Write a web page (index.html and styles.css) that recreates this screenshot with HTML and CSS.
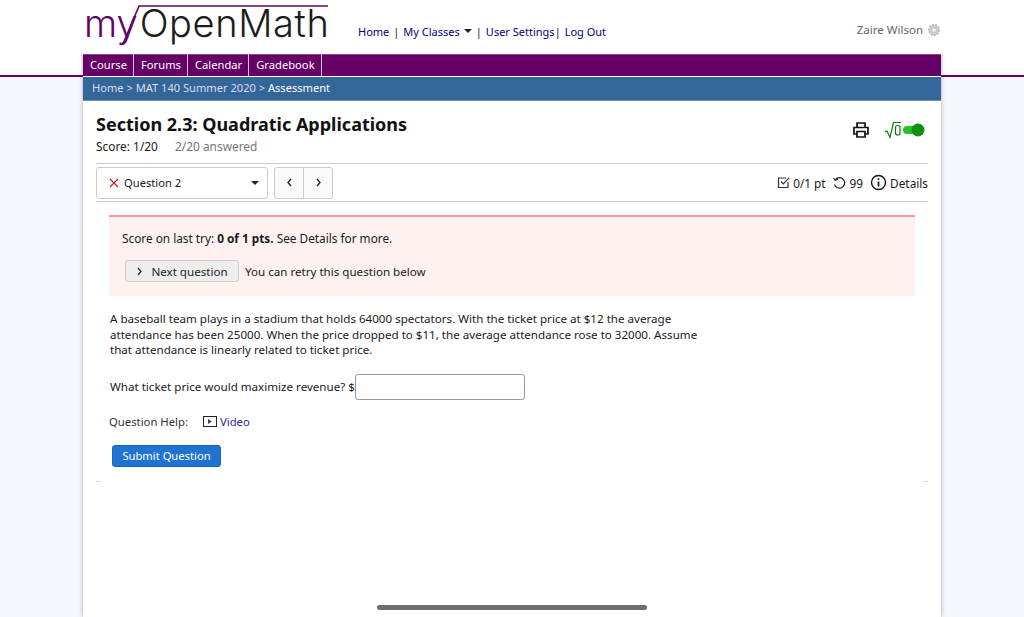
FILE: index.html
```html
<!DOCTYPE html>
<html lang="en">
<head>
<meta charset="utf-8">
<title>Assessment</title>
<link rel="stylesheet" href="styles.css">
</head>
<body>
<div class="band"></div>
<div class="page">
  <header class="head">
    <div class="logo"><span class="logo-my">my</span><span class="logo-rest">OpenMath</span><svg class="logo-root" width="206" height="40" viewBox="0 0 206 40"><path d="M1 39 L 17 1 H 206" fill="none" stroke="#660066" stroke-width="1.600"/></svg></div>
    <nav class="toplinks"><a>Home</a><span class="sep">|</span><a>My Classes</a><span class="caret"></span><span class="sep">|</span><a>User Settings</a><span class="sep tight">|</span><a>Log Out</a></nav>
    <div class="user">Zaire Wilson
      <svg class="gear" width="14" height="14" viewBox="0 0 14 14"><circle cx="7" cy="7" r="5" fill="#d4d4d4" stroke="#bdbdbd" stroke-width="2" stroke-dasharray="2 1"/><circle cx="7" cy="7" r="2.500" fill="#f0f0f0" stroke="#bdbdbd"/></svg>
    </div>
  </header>
  <div class="tabs"><a class="tab">Course</a><a class="tab">Forums</a><a class="tab">Calendar</a><a class="tab">Gradebook</a></div>
  <div class="crumbs">Home &gt; MAT 140 Summer 2020 &gt; <b>Assessment</b></div>
  <main class="main">
    <div class="title-row">
      <div>
        <h1>Section 2.3: Quadratic Applications</h1>
        <div class="score">Score: 1/20 <span class="answered">2/20 answered</span></div>
      </div>
      <div class="tools">
        <svg width="18" height="18" viewBox="0 0 18 18" fill="none" stroke="#111" stroke-width="1.700"><path d="M5 6 V2 H13 V6"/><path d="M5 13 H2 V6.500 H16 V13 H13"/><path d="M5 10.500 H13 V16 H5 Z"/></svg>
        <svg class="sqrt" width="42" height="18" viewBox="0 0 42 18"><path d="M1 11 L3 10 L6 16.500 L9.500 1.500 H17" fill="none" stroke="#0a7a0a" stroke-width="1.200"/><rect x="11.500" y="4.500" width="4.500" height="9.500" rx="2" fill="none" stroke="#0a7a0a" stroke-width="1.200"/><rect x="19" y="5" width="16" height="8" rx="4" fill="#22c322"/><circle cx="34" cy="9" r="6.500" fill="#129012"/></svg>
      </div>
    </div>
    <div class="qbar">
      <div class="select"><svg class="x" width="10" height="10" viewBox="0 0 10 10"><path d="M1 1 L9 9 M9 1 L1 9" fill="none" stroke="#c02020" stroke-width="1.100"/></svg><span class="qname">Question 2</span><span class="caret dark"></span></div>
      <div class="pager">
        <span class="pg"><svg width="7" height="9" viewBox="0 0 7 9"><path d="M5 1 L2 4.500 L5 8" fill="none" stroke="#222" stroke-width="1.300"/></svg></span>
        <span class="pg"><svg width="7" height="9" viewBox="0 0 7 9"><path d="M2 1 L5 4.500 L2 8" fill="none" stroke="#222" stroke-width="1.300"/></svg></span>
      </div>
      <div class="qinfo">
        <svg width="13" height="13" viewBox="0 0 13 13" fill="none" stroke="#333" stroke-width="1.200"><path d="M11 6 V11.500 H1.500 V2 H9"/><path d="M3.800 5.500 L6.300 8 L12 1.800"/></svg>
        <span class="i1">0/1 pt</span>
        <svg width="15" height="14" viewBox="0 0 15 14" fill="none" stroke="#222" stroke-width="1.200"><path d="M3.500 3.500 A5.200 5.200 0 1 1 2.500 8.500"/><path d="M1.500 2 L3.300 4.300 L6.200 3.300"/></svg>
        <span class="i2">99</span>
        <svg width="17" height="17" viewBox="0 0 17 17" fill="none" stroke="#111" stroke-width="1.400"><circle cx="8.500" cy="8.500" r="7"/><path d="M8.500 7.500 V12.500" stroke-width="1.700"/><path d="M8.500 4.300 V6" stroke-width="1.700"/></svg>
        <span>Details</span>
      </div>
    </div>
    <section class="body">
      <div class="alert">
        <p class="alert-line">Score on last try: <b>0 of 1 pts.</b> See Details for more.</p>
        <div class="alert-next"><button class="next"><svg width="7" height="9" viewBox="0 0 7 9"><path d="M2 1 L5 4.500 L2 8" fill="none" stroke="#222" stroke-width="1.200"/></svg>Next question</button><span>You can retry this question below</span></div>
      </div>
      <p class="question">A baseball team plays in a stadium that holds 64000 spectators. With the ticket price at $12 the average attendance has been 25000. When the price dropped to $11, the average attendance rose to 32000. Assume that attendance is linearly related to ticket price.</p>
      <div class="answer">What ticket price would maximize revenue? $<input class="field" type="text"></div>
      <div class="help">Question Help:
        <svg class="vid" width="14" height="11" viewBox="0 0 14 11"><rect x="0.500" y="0.500" width="13" height="10" fill="none" stroke="#222"/><path d="M5 3 L9 5.500 L5 8 Z" fill="#444"/></svg><a>Video</a>
      </div>
      <button class="submit">Submit Question</button>
    </section>
    <div class="rule"></div>
  </main>
</div>
<div class="home-bar"></div>
</body>
</html>
```
FILE: styles.css
```css
html, body { margin: 0; height: 617px; overflow: hidden; }
body { background: #f6f6ff; font-family: "Noto Sans", sans-serif; font-size: 11.600px; color: #1a1a1a; position: relative; }
.band { position: absolute; left: 0; right: 0; top: 0; height: 75px; background: #fff; border-bottom: 2px solid #660066; }
.page { position: relative; width: 858px; margin-left: 83px; height: 617px; background: #fff; box-shadow: 0 0 4px rgba(0,0,0,.35); display: flex; flex-direction: column; }
.head { height: 54px; background: #fff; display: flex; align-items: flex-start; position: relative; box-shadow: 0 -4px 0 4px #fff; }
.logo { position: relative; width: 275px; font-family: "Inter", sans-serif; font-weight: 300; font-size: 38px; line-height: 40px; margin-top: 3px; padding-left: 1px; box-sizing: border-box; white-space: nowrap; }
.logo-my { color: #660066; }
.logo-rest { color: #1c1c1c; margin-left: 2px; letter-spacing: .6px; }
.logo-root { position: absolute; left: 39px; top: 2px; overflow: visible; }
.toplinks { margin-top: 24px; color: #1a1a1a; display: flex; align-items: center; height: 14px; font-size: 11px; }
.toplinks a { color: #000080; }
.sep { margin: 0 4px; }
.sep.tight { margin: 0 4px 0 0; }
.caret { width: 0; height: 0; border: 4px solid transparent; border-top: 4px solid #222; border-bottom: 0; margin-left: 4px; display: inline-block; }
.user { margin-left: auto; margin-top: 22px; color: #666; display: flex; align-items: center; gap: 4px; font-size: 11.500px; }
.tabs { height: 22px; background: #660066; display: flex; box-shadow: inset 0 1px 0 #8a4a8a; font-size: 11.200px; }
.tab { color: #fff; padding: 0 6px 0 7px; line-height: 22px; border-right: 1px solid #ccc; }
.crumbs { line-height: 22px; margin-top: 1px; background: #336699; color: #dde; padding-left: 9px; border-bottom: 1px solid #6a8fb5; height: 23px; font-size: 11.100px; }
.crumbs b { color: #fff; font-weight: normal; }
.main { padding: 0 13px; flex: 1; display: flex; flex-direction: column; }
.title-row { display: flex; justify-content: space-between; height: 62px; border-bottom: 1px solid #ccc; }
h1 { margin: 12px 0 0; font-size: 18px; line-height: 23px; font-weight: bold; color: #111; }
.score { margin-top: 3px; line-height: 14px; font-size: 11.900px; }
.answered { color: #777; margin-left: 14px; }
.tools { display: flex; gap: 14px; margin-top: 20px; margin-right: 2px; align-items: flex-start; }
.qbar { display: flex; align-items: center; height: 37px; border-bottom: 1px solid #ccc; }
.select { border: 1px solid #ccc; border-radius: 3px; display: flex; align-items: center; padding-left: 12px; box-sizing: border-box; height: 32px; width: 172px; font-size: 11.200px; }
.x { margin-right: 5px; }
.caret.dark { margin-left: auto; margin-right: 8px; }
.pager { display: flex; margin-left: 6px; border: 1px solid #ccc; border-radius: 3px; background: #fafafa; }
.pg { width: 28px; height: 30px; display: flex; align-items: center; justify-content: center; }
.pg + .pg { border-left: 1px solid #ccc; }
.qinfo { margin-left: auto; display: flex; align-items: center; font-size: 11.800px; }
.qinfo svg { margin-right: 3px; }
.i1 { margin-right: 6px; }
.i2 { margin-right: 7px; }
.body { padding: 13px 13px 0; }
.alert { background: #fef1ef; border-top: 2px solid #f59a9a; padding: 0 13px; box-sizing: border-box; height: 81px; }
.alert-line { margin: 14px 0 0; line-height: 14px; font-size: 11.800px; }
.alert-next { display: flex; align-items: center; gap: 6px; margin-top: 15px; margin-left: 3px; }
.next { font: inherit; color: #222; height: 22px; width: 114px; padding: 0; background: #eee; border: 1px solid #ccc; border-radius: 3px; display: flex; align-items: center; justify-content: center; gap: 8px; }
.question { margin: 15px 0 0 1px; width: 590px; line-height: 15.600px; }
.answer { display: flex; align-items: center; margin: 16px 0 0 1px; line-height: 26px; }
.field { width: 170px; height: 26px; box-sizing: border-box; border: 1px solid #999; border-radius: 3px; margin: 0; padding: 0; background: #fff; }
.help { margin-top: 14px; line-height: 16px; display: flex; align-items: center; color: #333; font-size: 11.300px; }
.vid { margin: 0 3px 0 15px; }
.help a { color: #2a2aa0; }
.submit { display: block; font: inherit; font-size: 11.200px; color: #fff; margin: 15px 0 0 3px; width: 109px; height: 22px; padding: 0; background: #1f74d1; border: 1px solid #1a66bb; border-radius: 3px; }
.rule { margin: 14px 0 0; height: 1px; background: linear-gradient(to right, #ccc, #fff 8px, #fff calc(100% - 8px), #ccc); }
.home-bar { position: absolute; left: 377px; top: 605px; width: 270px; height: 5px; border-radius: 3px; background: #6e6e6e; }
```
